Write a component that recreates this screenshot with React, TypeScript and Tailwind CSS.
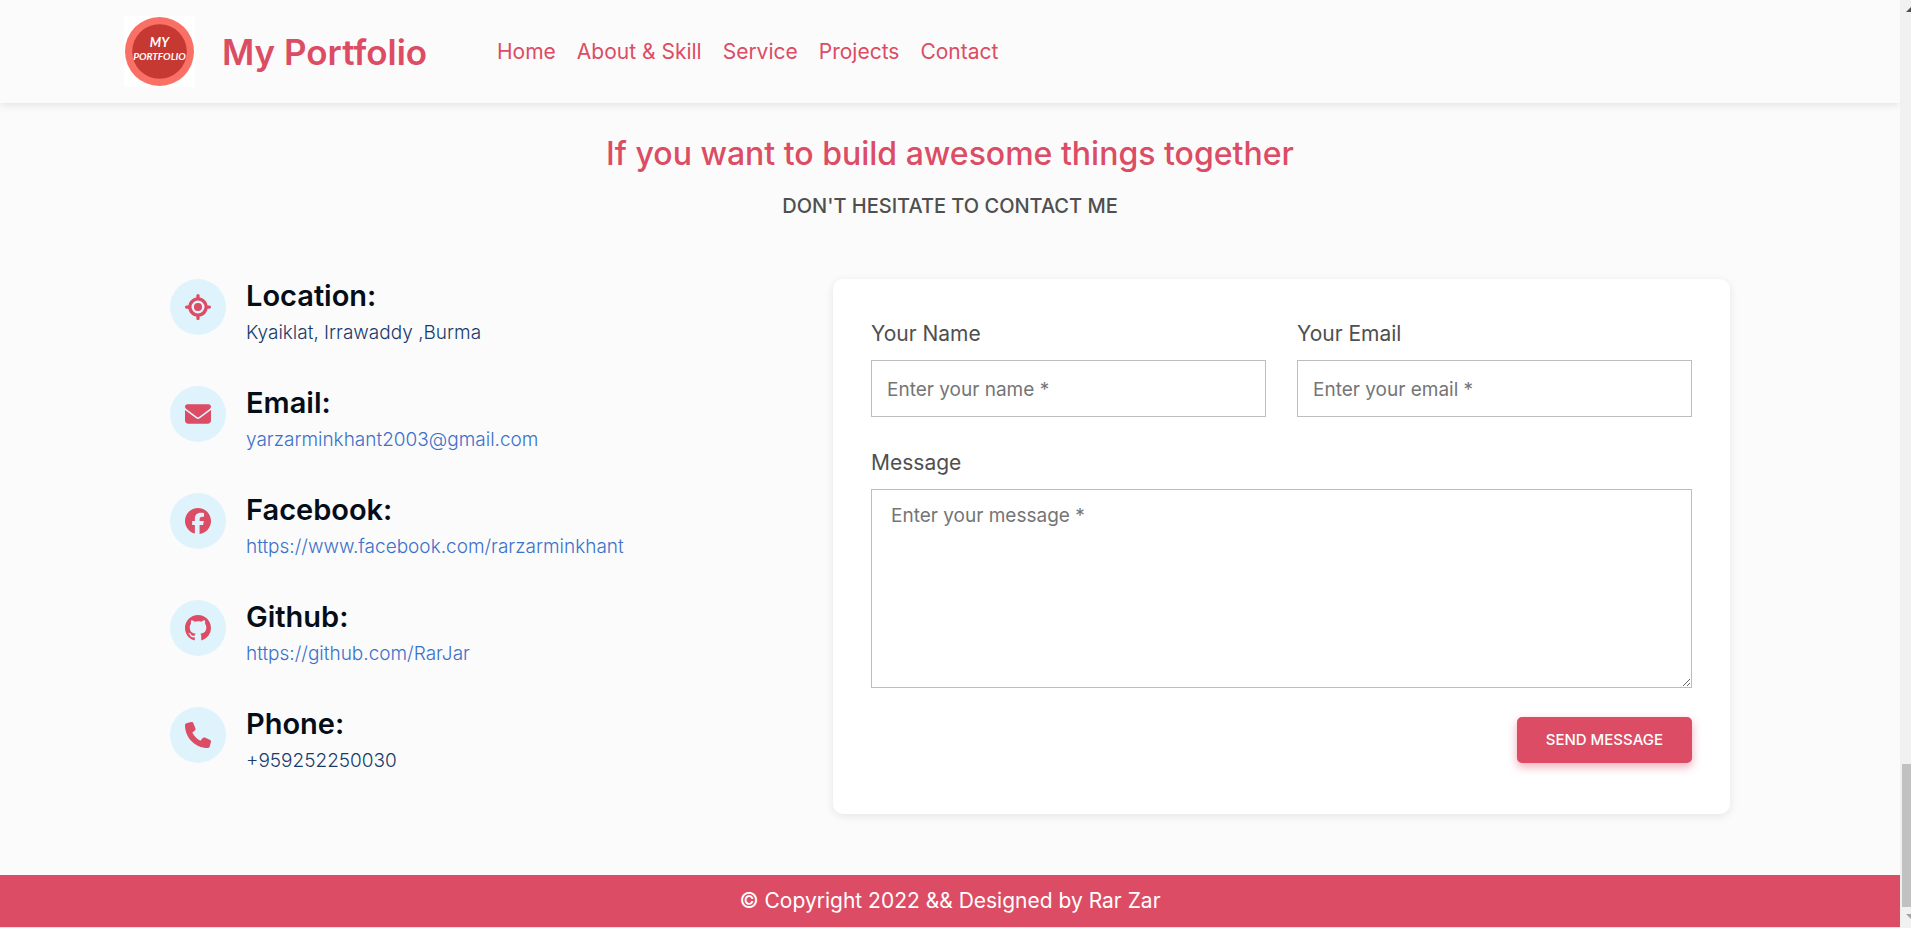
import type { ReactNode } from "react";
import {
  FaEnvelope,
  FaFacebook,
  FaLocationCrosshairs,
  FaPhone,
} from "react-icons/fa6";

const navLinks = ["Home", "About & Skill", "Service", "Projects", "Contact"];

type Contact = { title: string; text: string; href?: string; icon: ReactNode };

const contacts: Contact[] = [
  { title: "Location:", text: "Kyaiklat, Irrawaddy ,Burma", icon: <FaLocationCrosshairs /> },
  {
    title: "Email:",
    text: "yarzarminkhant2003@gmail.com",
    href: "mailto:yarzarminkhant2003@gmail.com",
    icon: <FaEnvelope />,
  },
  {
    title: "Facebook:",
    text: "https://www.facebook.com/rarzarminkhant",
    href: "https://www.facebook.com/rarzarminkhant",
    icon: <FaFacebook />,
  },
  {
    title: "Github:",
    text: "https://github.com/RarJar",
    href: "https://github.com/RarJar",
    icon: <GithubMark />,
  },
  { title: "Phone:", text: "+959252250030", icon: <FaPhone /> },
];

function GithubMark() {
  return (
    <svg viewBox="0 0 16 16" width="1em" height="1em" fill="currentColor" aria-hidden="true">
      <path d="M8 0C3.58 0 0 3.58 0 8c0 3.54 2.29 6.53 5.47 7.59.4.07.55-.17.55-.38 0-.19-.01-.82-.01-1.49-2.01.37-2.53-.49-2.69-.94-.09-.23-.48-.94-.82-1.13-.28-.15-.68-.52-.01-.53.63-.01 1.08.58 1.23.82.72 1.21 1.87.87 2.33.66.07-.52.28-.87.51-1.07-1.78-.2-3.64-.89-3.64-3.95 0-.87.31-1.59.82-2.15-.08-.2-.36-1.02.08-2.12 0 0 .67-.21 2.2.82a7.6 7.6 0 0 1 2-.27c.68 0 1.36.09 2 .27 1.53-1.04 2.2-.82 2.2-.82.44 1.1.16 1.92.08 2.12.51.56.82 1.27.82 2.15 0 3.07-1.87 3.75-3.65 3.95.29.25.54.73.54 1.48 0 1.07-.01 1.93-.01 2.2 0 .21.15.46.55.38A8.01 8.01 0 0 0 16 8c0-4.42-3.58-8-8-8Z" />
    </svg>
  );
}

function Logo() {
  return (
    <svg viewBox="0 0 71 71" className="size-[71px] bg-white" role="img" aria-label="My Portfolio logo">
      <circle cx="35.5" cy="35.5" r="34.5" fill="#f97066" />
      <circle cx="35.5" cy="35.5" r="27.3" fill="#c63832" />
      <g fill="#fff" fontFamily="Lato, sans-serif" fontWeight="700" fontStyle="italic" textAnchor="middle">
        <text x="35.5" y="31" fontSize="13">MY</text>
        <text x="35.5" y="44" fontSize="10">PORTFOLIO</text>
      </g>
    </svg>
  );
}

function Header() {
  return (
    <header className="relative flex h-[103px] items-center bg-[#fbfbfb] pl-[124px] shadow-[0_2px_8px_rgba(0,0,0,0.1)]">
      <a href="#home" className="flex items-center gap-[27px]">
        <Logo />
        <span className="w-[204px] text-[35px] leading-[40px] font-semibold whitespace-nowrap text-[#dc4c64]">
          My Portfolio
        </span>
      </a>
      <nav className="ml-[71px] flex gap-[21px] text-[21px] leading-[30px] text-[#dc4c64]">
        {navLinks.map((label) => (
          <a key={label} href={"#" + label.split(" ")[0].toLowerCase()}>
            {label}
          </a>
        ))}
      </nav>
    </header>
  );
}

function ContactRow({ title, text, href, icon }: Contact) {
  return (
    <li className="flex gap-5">
      <span className="flex size-14 shrink-0 items-center justify-center rounded-full bg-[#dff3fc] text-[26px] text-[#dc4c64]">
        {icon}
      </span>
      <div>
        <h3 className="text-[29px] leading-[33px] font-semibold text-[#050d18]">{title}</h3>
        {href ? (
          <a href={href} className="mt-1.5 block text-[19px] leading-[30px] font-light text-[#3b71ca]">
            {text}
          </a>
        ) : (
          <p className="mt-1.5 text-[19px] leading-[30px] font-light text-[#173b6c]">{text}</p>
        )}
      </div>
    </li>
  );
}

function Field({ id, type, label, placeholder }: { id: string; type: string; label: string; placeholder: string }) {
  return (
    <div>
      <label htmlFor={id} className="block text-[21px] leading-[30px] text-[#4f4f4f]">
        {label}
      </label>
      <input
        id={id}
        type={type}
        placeholder={placeholder}
        className="mt-[11px] h-[57px] w-full border border-[#bdbdbd] bg-white px-[15px] pt-0.5 text-[19px] placeholder:text-[#757575]"
      />
    </div>
  );
}

function ContactForm() {
  return (
    <form className="flex flex-col rounded-[10px] bg-white px-[38px] pt-10 pb-[51px] shadow-[0_2px_10px_rgba(0,0,0,0.09)]">
      <div className="grid grid-cols-2 gap-[31px]">
        <Field id="name" type="text" label="Your Name" placeholder="Enter your name *" />
        <Field id="email" type="email" label="Your Email" placeholder="Enter your email *" />
      </div>
      <label htmlFor="message" className="mt-[31px] block text-[21px] leading-[30px] text-[#4f4f4f]">
        Message
      </label>
      <textarea
        id="message"
        placeholder="Enter your message *"
        className="mt-[11px] block h-[199px] w-full resize border border-[#bdbdbd] bg-white px-[19px] py-3 text-[19px] leading-[27px] placeholder:text-[#757575]"
      />
      <button
        type="button"
        className="mt-[29px] h-[46px] self-end rounded-[5px] bg-[#dc4c64] px-[29px] text-[15px] font-medium whitespace-nowrap text-white uppercase shadow-[0_4px_10px_rgba(220,76,100,0.45)]"
      >
        Send message
      </button>
    </form>
  );
}

function Scrollbar() {
  return (
    <div aria-hidden="true" className="flex w-[11px] shrink-0 flex-col items-end overflow-hidden bg-[#f1f1f1]">
      <svg viewBox="0 0 5 5" className="mt-[7px] h-[5px] w-[5px]">
        <path d="M0 5 5 0V5Z" fill="#505050" />
      </svg>
      <div className="mt-auto h-[143px] w-[9px] bg-[#c1c1c1]" />
      <svg viewBox="0 0 5 5" className="mt-[7px] mb-[9px] h-[5px] w-[5px]">
        <path d="M0 0H5V5Z" fill="#a3a3a3" />
      </svg>
    </div>
  );
}

export default function App() {
  return (
    <div className="flex min-h-screen bg-[#fbfbfb] font-['Inter','Noto_Sans',sans-serif]">
      <div className="flex min-w-0 flex-1 flex-col overflow-hidden border-b border-[#e4e4e4]">
        <Header />
        <main className="flex-1 px-[170px] pt-[31px] pb-[61px]">
          <h2 className="text-center text-[32px] leading-[40px] font-medium text-[#dc4c64]">
            If you want to build awesome things together
          </h2>
          <p className="mt-[17px] text-center text-xl leading-[30px] font-medium text-[#4f4f4f] uppercase">
            Don't hesitate to contact me
          </p>
          <div className="mt-[58px] grid grid-cols-[663fr_897fr]">
            <ul className="flex flex-col gap-[38px]">
              {contacts.map((c) => (
                <ContactRow key={c.title} {...c} />
              ))}
            </ul>
            <ContactForm />
          </div>
        </main>
        <footer className="flex h-[52px] items-center justify-center bg-[#dc4c64] text-[21px] text-white">
          © Copyright 2022 &amp;&amp; Designed by Rar Zar
        </footer>
      </div>
      <Scrollbar />
    </div>
  );
}
